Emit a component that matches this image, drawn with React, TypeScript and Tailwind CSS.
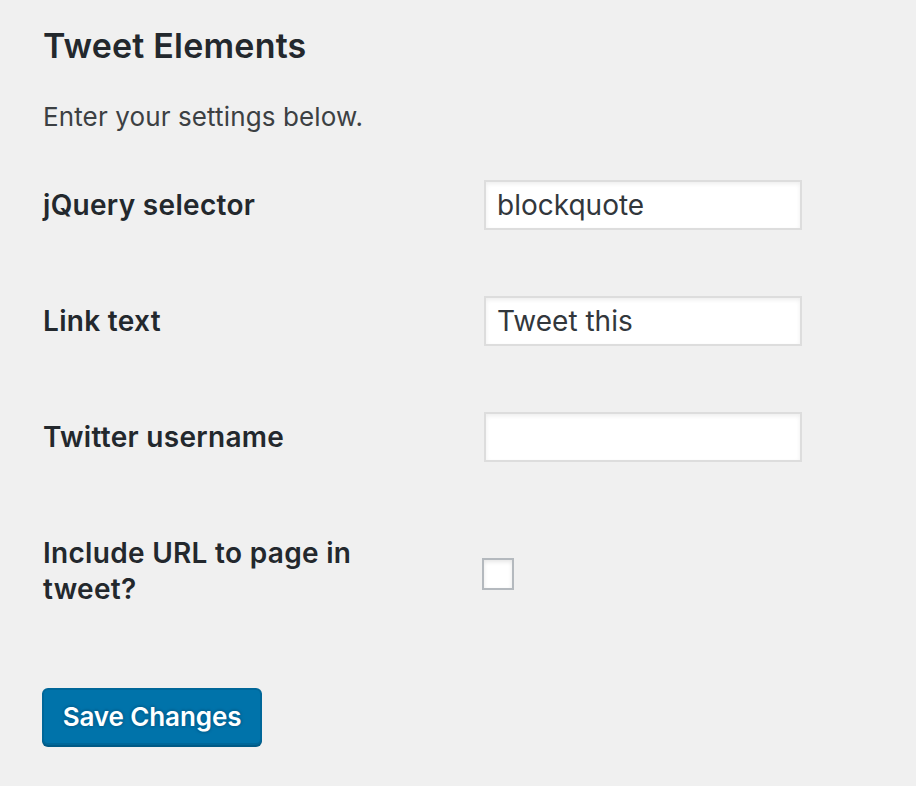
import { useState } from "react";

const fields = [
  { label: "jQuery selector", value: "blockquote" },
  { label: "Link text", value: "Tweet this" },
  { label: "Twitter username", value: "" },
];

export default function App() {
  const [values, setValues] = useState(fields.map((f) => f.value));
  const [includeUrl, setIncludeUrl] = useState(false);

  return (
    <div className="min-h-[786px] bg-[#f0f0f0] pl-[43px] pt-6 font-['Inter',sans-serif] text-[#23282d]">
      <h2 className="text-[34px] leading-[44px] font-semibold tracking-[0.2px]">Tweet Elements</h2>
      <p className="mt-[31px] text-[26px] leading-[36px] tracking-[0.12px] text-[#3c4043]">Enter your settings below.</p>

      <div className="mt-[15px]">
        {fields.map((f, i) => (
          <div key={f.label} className="flex h-[116px] items-start">
            <label className="w-[441px] shrink-0 pt-[37px] text-[28px] leading-[36px] font-semibold tracking-[0.3px]">
              {f.label}
            </label>
            <div className="pt-[30px]">
              <input
                value={values[i]}
                onChange={(e) => setValues(values.map((v, j) => (j === i ? e.target.value : v)))}
                className="h-[50px] w-[318px] border-2 border-[#dddddd] bg-white px-[11px] text-[28px] text-[#32373c] shadow-[inset_0_2px_4px_rgba(0,0,0,0.07)] outline-none"
              />
            </div>
          </div>
        ))}

        <div className="flex items-start">
          <label className="w-[439px] shrink-0 pt-[37px] pr-[60px] text-[28px] leading-[36px] font-semibold tracking-[0.3px]">
            Include URL to page in tweet?
          </label>
          <div className="pt-[60px]">
            <button
              onClick={() => setIncludeUrl(!includeUrl)}
              className="block h-8 w-8 border-2 border-[#b4b9be] bg-white shadow-[inset_0_2px_4px_rgba(0,0,0,0.1)]"
            >
              {includeUrl && <span className="text-[22px] leading-none text-[#1e8cbe]">✓</span>}
            </button>
          </div>
        </div>
      </div>

      <button className="mt-[81px] ml-[-1px] h-[57px] w-[220px] rounded-[6px] border-2 border-[#006799] bg-[#0073aa] text-[26px] font-semibold tracking-[-0.1px] text-white shadow-[0_2px_0_#005a86] [text-shadow:0_-2px_2px_#006799,2px_0_2px_#006799,0_2px_2px_#006799,-2px_0_2px_#006799]">
        Save Changes
      </button>
    </div>
  );
}
